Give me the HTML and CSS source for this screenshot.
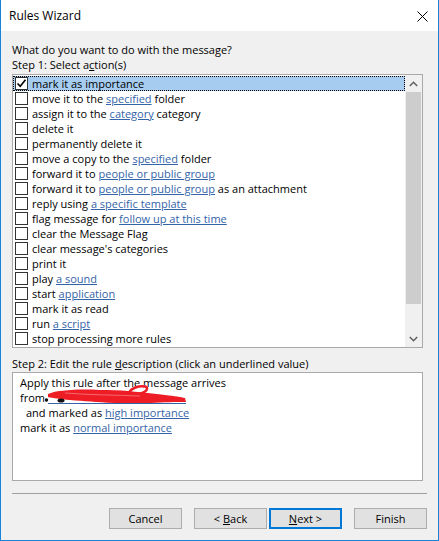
FILE: index.html
```html
<!DOCTYPE html>
<html>
<head>
<meta charset="utf-8">
<link rel="stylesheet" href="styles.css">
</head>
<body>
<div class="window">
  <div class="titlebar">
    <span class="title">Rules Wizard</span>
    <svg class="close" width="11" height="11" viewBox="0 0 11 11"><path d="M0.5 0.5 L10.5 10.5 M10.5 0.5 L0.5 10.5" stroke="#000" stroke-width="1" fill="none"/></svg>
  </div>
  <div class="content">
    <div class="label">What do you want to do with the message?</div>
    <div class="label">Step 1: Select a<u>c</u>tion(s)</div>
    <div class="listbox">
      <div class="list">
        <div class="row selected"><span class="cb checked"><svg width="11" height="11" viewBox="0 0 11 11"><path d="M1.5 5.5 L4.2 8.3 L9.5 1.8" stroke="#000" stroke-width="1.6" fill="none"/></svg></span><span>mark it as importance</span></div>
        <div class="row"><span class="cb"></span><span>move it to the <a>specified</a> folder</span></div>
        <div class="row"><span class="cb"></span><span>assign it to the <a>category</a> category</span></div>
        <div class="row"><span class="cb"></span><span>delete it</span></div>
        <div class="row"><span class="cb"></span><span>permanently delete it</span></div>
        <div class="row"><span class="cb"></span><span>move a copy to the <a>specified</a> folder</span></div>
        <div class="row"><span class="cb"></span><span>forward it to <a>people or public group</a></span></div>
        <div class="row"><span class="cb"></span><span>forward it to <a>people or public group</a> as an attachment</span></div>
        <div class="row"><span class="cb"></span><span>reply using <a>a specific template</a></span></div>
        <div class="row"><span class="cb"></span><span>flag message for <a>follow up at this time</a></span></div>
        <div class="row"><span class="cb"></span><span>clear the Message Flag</span></div>
        <div class="row"><span class="cb"></span><span>clear message's categories</span></div>
        <div class="row"><span class="cb"></span><span>print it</span></div>
        <div class="row"><span class="cb"></span><span>play <a>a sound</a></span></div>
        <div class="row"><span class="cb"></span><span>start <a>application</a></span></div>
        <div class="row"><span class="cb"></span><span>mark it as read</span></div>
        <div class="row"><span class="cb"></span><span>run <a>a script</a></span></div>
        <div class="row"><span class="cb"></span><span>stop processing more rules</span></div>
      </div>
      <div class="scrollbar">
        <div class="sbtn"><svg width="9" height="6" viewBox="0 0 9 6"><path d="M0.8 5 L4.5 1.3 L8.2 5" stroke="#606060" stroke-width="1.5" fill="none"/></svg></div>
        <div class="thumb"></div>
        <div class="track"></div>
        <div class="sbtn"><svg width="9" height="6" viewBox="0 0 9 6"><path d="M0.8 1 L4.5 4.7 L8.2 1" stroke="#606060" stroke-width="1.5" fill="none"/></svg></div>
      </div>
    </div>
    <div class="label step2">Step 2: Edit the rule <u>d</u>escription (click an underlined value)</div>
    <div class="desc">
      <div class="dline">Apply this rule after the message arrives</div>
      <div class="dline">from <a class="redacted"></a></div>
      <div class="dline indent">and marked as <a>high importance</a></div>
      <div class="dline">mark it as <a>normal importance</a></div>
      <svg class="scribble" width="146" height="24" viewBox="0 0 146 24">
        <path d="M3 10 C8 8 12 7 15 7 C25 6 35 5 55 6 C65 6 75 6 83 7 C95 8 110 10 120 11 C130 12 136 13 140 14 L141 18 C130 18 120 18 105 19 C90 19 80 19 70 19 C50 18 40 17 25 16 C15 15 8 14 3 13 Z" fill="#ee1c25"/>
        <path d="M84 9 C86 4 94 1.5 100 2.5 C104 3.5 102 8 95 9.5 C90 10.5 86 10 84 9" stroke="#ee1c25" stroke-width="2.5" fill="none" stroke-linecap="round"/>
        <path d="M20 9 C45 11 70 11 95 12" stroke="#f36a6f" stroke-width="1" fill="none"/>
        <circle cx="1.5" cy="16" r="1.7" fill="#111"/>
        <ellipse cx="16" cy="16.5" rx="3.5" ry="2" fill="#111"/>
      </svg>
    </div>
    <div class="separator"></div>
    <div class="buttons">
      <button class="btn">Cancel</button>
      <button class="btn back">&lt; <u>B</u>ack</button>
      <button class="btn default"><u>N</u>ext &gt;</button>
      <button class="btn finish">Finish</button>
    </div>
  </div>
</div>
</body>
</html>
```

FILE: styles.css
```css
html, body {
  margin: 0;
  padding: 0;
  background: #ffffff;
}
body {
  font-family: "Open Sans", "Noto Sans", sans-serif;
  font-size: 11px;
  color: #000;
}
.window {
  width: 439px;
  height: 541px;
  box-sizing: border-box;
  border: 1px solid #1883d7;
  border-top: none;
  background: #f0f0f0;
  display: flex;
  flex-direction: column;
}
.titlebar {
  height: 31px;
  flex: none;
  background: #ffffff;
  display: flex;
  align-items: center;
  justify-content: space-between;
  padding: 0 10px 0 8px;
}
.title {
  font-size: 12px;
  line-height: 16px;
}
.close {
  display: block;
  margin-top: 1px;
}
.content {
  padding: 11px 11px 0 11px;
  display: flex;
  flex-direction: column;
}
.label {
  line-height: 15px;
  height: 15px;
  white-space: nowrap;
}
u {
  text-decoration: underline;
  text-underline-offset: 1px;
}
a {
  color: #3464a8;
  text-decoration: underline;
  text-underline-offset: 1px;
}
.listbox {
  margin-top: 2px;
  width: 411px;
  height: 274px;
  box-sizing: border-box;
  border: 1px solid #a9a9a9;
  background: #ffffff;
  display: flex;
}
.list {
  flex: 1;
  padding-top: 1px;
  min-width: 0;
  overflow: hidden;
}
.row {
  height: 15px;
  line-height: 15px;
  display: flex;
  align-items: center;
  padding-left: 2px;
  white-space: nowrap;
  box-sizing: border-box;
}
.row.selected {
  background: #a6cdf0;
  outline: 1px dotted #000;
  outline-offset: -1px;
}
.cb {
  width: 13px;
  height: 13px;
  box-sizing: border-box;
  border: 1px solid #333333;
  background: #ffffff;
  margin-right: 4px;
  flex: none;
  display: flex;
  align-items: center;
  justify-content: center;
}
.cb svg {
  display: block;
}
.scrollbar {
  width: 17px;
  flex: none;
  background: #f0f0f0;
  display: flex;
  flex-direction: column;
}
.sbtn {
  height: 17px;
  flex: none;
  display: flex;
  align-items: center;
  justify-content: center;
}
.thumb {
  height: 212px;
  margin: 0 1px;
  background: #cdcdcd;
  flex: none;
}
.track {
  flex: 1;
}
.step2 {
  margin-top: 8px;
}
.desc {
  position: relative;
  margin-top: 1px;
  width: 411px;
  height: 109px;
  box-sizing: border-box;
  border: 1px solid #a9a9a9;
  background: #ffffff;
  padding: 2px 0 0 7px;
}
.dline {
  height: 15px;
  line-height: 15px;
  white-space: nowrap;
}
.indent {
  padding-left: 6px;
}
.redacted {
  display: inline-block;
  width: 138px;
  height: 11px;
  border-bottom: 1px solid #3464a8;
  vertical-align: -2px;
}
.scribble {
  position: absolute;
  left: 32px;
  top: 11px;
}
.separator {
  margin-top: 12px;
  width: 415px;
  height: 1px;
  background: #a0a0a0;
}
.buttons {
  margin-top: 14px;
  display: flex;
  justify-content: flex-end;
  width: 415px;
}
.btn {
  width: 73px;
  height: 21px;
  box-sizing: border-box;
  border: 1px solid #adadad;
  background: #e1e1e1;
  font-family: "Open Sans", "Noto Sans", sans-serif;
  font-size: 11px;
  color: #000;
  padding: 0;
  margin: 0;
  line-height: 17px;
}
.back {
  margin-left: 12px;
}
.default {
  margin-left: 2px;
  border: 2px solid #0078d7;
}
.finish {
  margin-left: 12px;
}
```
